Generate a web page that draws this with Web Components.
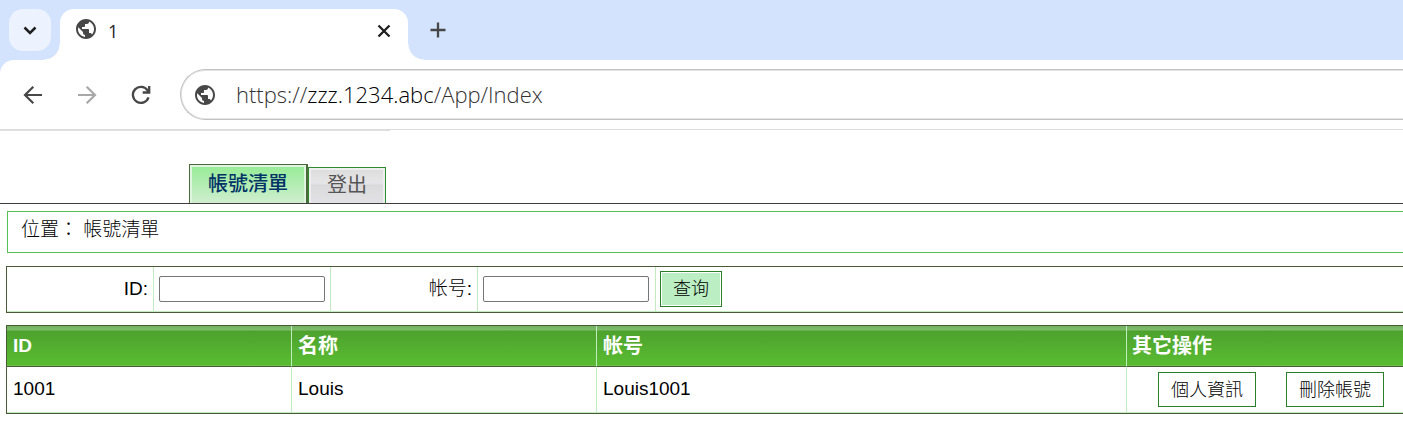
<!DOCTYPE html>
<html lang="zh-Hant">
<head>
<meta charset="utf-8">
<title>帳號清單</title>
<style>
html, body { margin: 0; background: #fff; }
body { font: 19px/24px "Liberation Sans", "Noto Sans CJK TC", sans-serif; color: #000; overflow-x: hidden; }
</style>
</head>
<body>
<browser-chrome>
  <browser-tab slot="tab">1</browser-tab>
  <address-bar slot="address" scheme="https://" host="zzz.1234.abc" path="/App/Index"></address-bar>
</browser-chrome>
<account-page></account-page>

<script>
const GLOBE = `<svg viewBox="0 0 24 24" width="24" height="24" fill="#474747" aria-hidden="true"><path d="M12 2C6.480 2 2 6.480 2 12s4.480 10 10 10 10-4.480 10-10S17.520 2 12 2zm-1 17.930c-3.950-.490-7-3.850-7-7.930 0-.620.080-1.210.210-1.790L9 15v1c0 1.100.900 2 2 2v1.930zm6.900-2.540c-.260-.810-1-1.390-1.900-1.390h-1v-3c0-.550-.450-1-1-1H8v-2h2c.550 0 1-.450 1-1V7h2c1.100 0 2-.900 2-2v-.410c2.930 1.190 5 4.060 5 7.410 0 2.080-.800 3.970-2.100 5.390z"/></svg>`;

class Base extends HTMLElement {
  constructor() { super(); this.attachShadow({ mode: "open" }); }
  connectedCallback() { this.shadowRoot.innerHTML = this.render(); }
}

customElements.define("browser-tab", class extends Base {
  render() { return `<style>
    :host { display: flex; align-items: center; box-sizing: border-box; width: 348px; height: 51px; padding: 0 14px; background: #fff; border-radius: 14px 14px 0 0; position: relative; font: 18px/24px "Open Sans", sans-serif; color: #1f1f1f; }
    :host::before, :host::after { content: ""; position: absolute; bottom: 0; width: 16px; height: 16px; }
    :host::before { right: 100%; background: radial-gradient(circle at 0 0, transparent 15px, #fff 16px); }
    :host::after { left: 100%; background: radial-gradient(circle at 100% 0, transparent 15px, #fff 16px); }
    svg { display: block; }
    .globe { padding-bottom: 12px; }
    .title { flex: 1; padding: 0 0 8px 10px; }
    button { border: 0; padding: 0; background: none; width: 20px; height: 20px; margin-bottom: 8px; }
  </style><span class="globe">${GLOBE}</span><span class="title"><slot></slot></span>
  <button aria-label="Close tab"><svg width="20" height="20" viewBox="0 0 20 20"><path d="M4.500 4.500l11 11M15.500 4.500l-11 11" stroke="#1f1f1f" stroke-width="2.300"/></svg></button>`; }
});

customElements.define("address-bar", class extends Base {
  render() { const a = n => this.getAttribute(n); return `<style>
    :host { display: flex; align-items: center; flex: 1; box-sizing: border-box; height: 51px; padding-left: 12px; border: 1px solid #c2c2c2; border-right: 0; box-shadow: inset 1px 0 0 #e4e4e4, inset 0 1px 0 #e4e4e4, inset 0 -1px 0 #e4e4e4; border-radius: 26px 0 0 26px; font: 300 22px/30px "Open Sans", sans-serif; color: #333; }
    svg { display: block; }
    a { margin-left: 19px; padding-bottom: 2px; color: inherit; text-decoration: none; }
    b { font-weight: 300; color: #000; }
  </style>${GLOBE}<a href="#">${a("scheme")}<b>${a("host")}</b>${a("path")}</a>`; }
});

customElements.define("browser-chrome", class extends Base {
  render() { return `<style>
    :host { display: block; background: #d3e3fd; }
    .strip { display: flex; align-items: flex-end; height: 60px; }
    button { display: grid; place-items: center; border: 0; padding: 0; background: none; }
    .menu { width: 42px; height: 42px; margin: 0 9px; align-self: center; border-radius: 14px; background: #ecf2fe; }
    .new { width: 24px; height: 24px; margin: 0 18px; align-self: center; }
    .bar { display: flex; align-items: center; box-sizing: border-box; height: 70px; padding-left: 21px; gap: 30px; background: #fff; border-radius: 14px 0 0 0; border-bottom: 1px solid #dedede; }
    ::slotted(address-bar) { flex: 1; margin-left: -3px; }
    .bar button { width: 24px; height: 24px; }
    .edge { height: 1px; background: linear-gradient(90deg, #dedede 390px, #fff 390px); }
    svg { display: block; }
  </style>
  <div class="strip">
    <button class="menu" aria-label="Search tabs"><svg width="20" height="20" viewBox="0 0 20 20"><path d="M4.500 7.500l5.500 5.500 5.500-5.500" fill="none" stroke="#1f1f1f" stroke-width="2.500"/></svg></button>
    <slot name="tab"></slot>
    <button class="new" aria-label="New tab"><svg width="24" height="24" viewBox="0 0 24 24"><path d="M12 4.500v15M4.500 12h15" stroke="#474747" stroke-width="2.300"/></svg></button>
  </div>
  <div class="bar">
    <button aria-label="Back"><svg width="24" height="24" viewBox="0 0 24 24"><path d="M21 12H4.500M12.300 3.700L4 12l8.300 8.300" fill="none" stroke="#474747" stroke-width="2.200"/></svg></button>
    <button aria-label="Forward"><svg width="24" height="24" viewBox="0 0 24 24"><path d="M3 12h16.500M11.700 3.700L20 12l-8.300 8.300" fill="none" stroke="#a8a8a8" stroke-width="2.200"/></svg></button>
    <button aria-label="Reload"><svg width="24" height="24" viewBox="0 0 24 24"><path d="M19.500 14.300A8 8 0 1 1 18.500 7.300l1.700 2M20.200 3v6.500h-6.500" fill="none" stroke="#474747" stroke-width="2.300"/></svg></button>
    <slot name="address"></slot>
  </div>
  <div class="edge"></div>`; }
});

customElements.define("nav-tab", class extends Base {
  render() { return `<style>
    :host { display: block; box-sizing: border-box; height: 36px; border: 1px solid #2e8b2e; border-bottom: 0; font-size: 20px; line-height: 30px; }
    :host([active]) { height: 39px; border-color: #4b6b3c; border-right-width: 2px; }
    a { display: block; box-sizing: border-box; height: 100%; padding: 0 16px; border: 2px solid #eee; border-bottom: 0; background: linear-gradient(#ddd, #e6e6e8 40%, #dadadc 45%, #e2e2e6); color: #555; text-decoration: none; }
    :host([active]) a { border: 2px solid #dff5df; border-bottom: 0; background: linear-gradient(#98ec98, #cfeecf); color: #036; font-weight: 500; line-height: 34px; }
  </style><a href="#"><slot></slot></a>`; }
});

customElements.define("nav-tabs", class extends Base {
  render() { return `<style>
    :host { display: flex; align-items: flex-end; padding: 33px 0 0 189px; border-bottom: 1px solid #443c3c; }
  </style><slot></slot>`; }
});

customElements.define("location-bar", class extends Base {
  render() { return `<style>
    :host { display: block; box-sizing: border-box; height: 42px; margin: 7px 0 0 7px; padding: 6px 13px; border: 1px solid #55c055; border-right: 0; line-height: 24px; font-weight: 300; }
  </style><slot></slot>`; }
});

customElements.define("search-form", class extends Base {
  render() { return `<style>
    :host { display: block; margin: 13px 0 0 6px; border: 1px solid #4a5a36; border-right: 0; }
    form { display: flex; height: 44px; border-bottom: 1px solid #c0ecc0; }
    form > * { box-sizing: border-box; border-right: 1px solid #c0ecc0; }
    label { width: 147px; padding: 10px 5px; text-align: right; line-height: 24px; font-weight: 300; }
    .field { width: 177px; padding: 9px 5px; }
    .wide { width: 178px; }
    input { display: block; box-sizing: border-box; width: 166px; height: 26px; border: 1px solid #767676; border-radius: 2px; font: inherit; }
    .go { border: 0; padding: 4px; }
    button { display: block; box-sizing: border-box; height: 36px; padding: 0 12px; font: inherit; font-weight: 300; font-size: 18px; line-height: 32px; border: 1px solid #2a802a; box-shadow: inset 0 0 0 1px #fff; background: #bbeec3; color: #000; }
  </style><form><label for="i">ID:</label><span class="field"><input id="i"></span><label for="n" lang="zh-Hans">帐号:</label><span class="field wide"><input id="n"></span><span class="go" lang="zh-Hans"><button type="button">查询</button></span></form>`; }
});

customElements.define("action-button", class extends Base {
  render() { return `<style>
    :host { display: inline-block; }
    button { display: block; box-sizing: border-box; height: 35px; padding: 0 12px; font: inherit; font-weight: 300; font-size: 18px; line-height: 32px; border: 1px solid #2a802a; background: #fff; color: #000; }
  </style><button><slot></slot></button>`; }
});

customElements.define("account-table", class extends Base {
  render() { return `<style>
    :host { display: block; margin: 12px 0 0 6px; }
    table { width: 100%; table-layout: fixed; border-collapse: separate; border-spacing: 0; border: 1px solid #4a5a36; border-right: 0; }
    th, td { box-sizing: border-box; padding: 0 6px; text-align: left; border-right: 1px solid #c0ecc0; }
    th:last-child, td:last-child { border-right: 0; padding: 0 5px; }
    th { height: 41px; color: #fff; border-bottom: 1px solid #4a5a36; background: linear-gradient(#71b060, #7fbd6c 4px, #4da22d 5px, #59bc32 39px, #7cc862 40px); }
    th[lang] { font-size: 20px; }
    td { height: 46px; padding-bottom: 2px; border-bottom: 1px solid #c0ecc0; }
    td:last-child { padding-bottom: 0; }
    .a { width: 285px; } .b { width: 305px; } .d { width: 276px; }
    .acts { display: flex; gap: 30px; padding-left: 26px; }
  </style><table><colgroup><col class="a"><col class="b"><col><col class="d"></colgroup>
  <thead><tr><th>ID</th><th lang="zh-Hans">名称</th><th lang="zh-Hans">帐号</th><th lang="zh-Hans">其它操作</th></tr></thead>
  <tbody><tr><td>1001</td><td>Louis</td><td>Louis1001</td><td><div class="acts"><action-button>個人資訊</action-button><action-button>刪除帳號</action-button></div></td></tr></tbody></table>`; }
});

customElements.define("account-page", class extends Base {
  render() { return `<style>:host { display: block; }</style>
  <nav-tabs><nav-tab active>帳號清單</nav-tab><nav-tab>登出</nav-tab></nav-tabs>
  <location-bar>位置： 帳號清單</location-bar>
  <search-form></search-form>
  <account-table></account-table>`; }
});
</script>
</body>
</html>
